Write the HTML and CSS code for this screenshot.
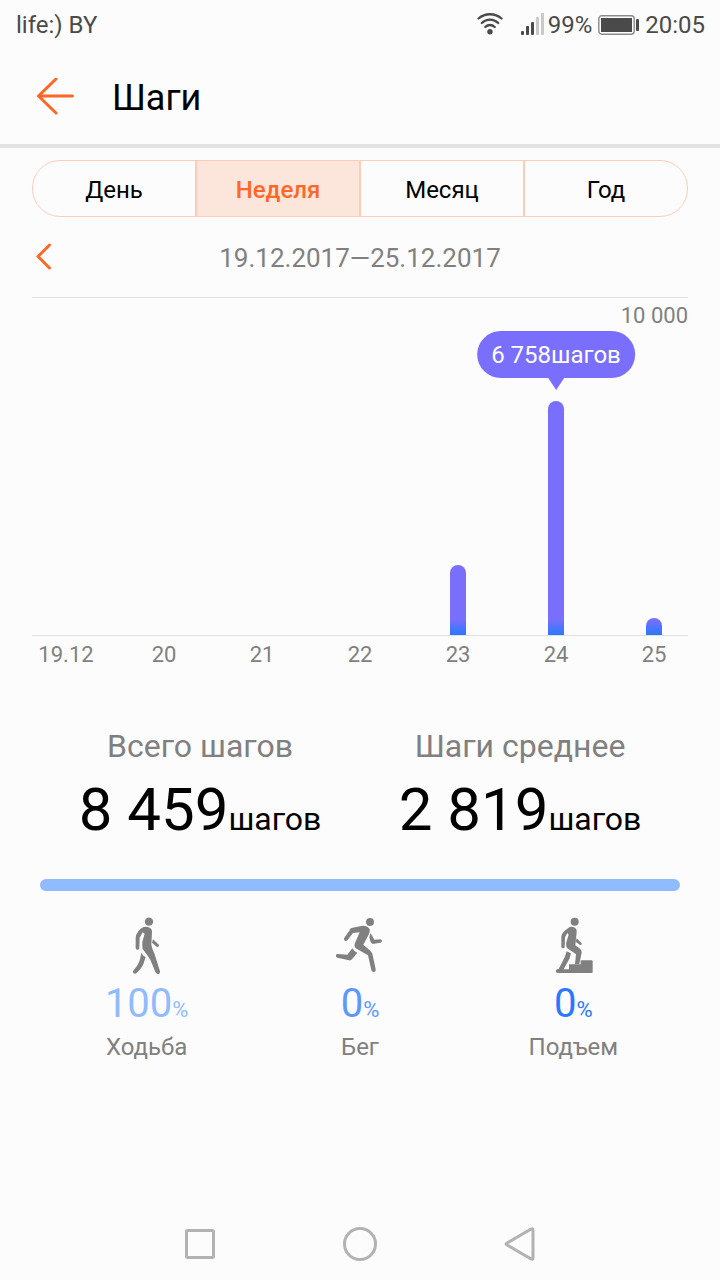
FILE: index.html
```html
<!DOCTYPE html>
<html lang="ru">

<head>
    <meta charset="UTF-8">
    <meta name="viewport" content="width=device-width, initial-scale=1.0">
    <title>Шаги</title>
    <link rel="stylesheet" href="styles.css">
</head>

<body>
    <div class="status">
        <span class="carrier">life:) BY</span>
        <svg class="wifi" width="26" height="24" viewBox="0 0 26 24">
            <g fill="none" stroke="#4a4a4a" stroke-width="2.3" stroke-linecap="round">
                <path d="M1.500 5.500C8 -.2 18 -.2 24.500 5.500"/>
                <path d="M4.800 10C9.500 5.500 16.500 5.500 21.200 10"/>
                <path d="M8.300 14C11 11.300 15 11.300 17.700 14"/>
            </g>
            <circle cx="13" cy="18.800" r="2.700" fill="#4a4a4a"/>
        </svg>
        <svg class="signal" width="24" height="24" viewBox="0 0 24 24">
            <g fill="#4a4a4a">
                <rect x="0" y="18" width="3" height="4" rx="1"/>
                <rect x="5" y="13" width="3" height="9" rx="1"/>
                <rect x="10" y="9" width="3" height="13" rx="1"/>
            </g>
            <g fill="#c9c9c9">
                <rect x="15" y="4" width="3" height="18" rx="1"/>
                <rect x="20" y="0" width="3" height="22" rx="1"/>
            </g>
        </svg>
        <span class="percent">99%</span>
        <svg class="battery" width="42" height="20" viewBox="0 0 42 20">
            <rect x=".8" y=".8" width="35.400" height="18.400" rx="3" fill="none" stroke="#8a8a8a" stroke-width="1.4"/>
            <rect x="3" y="3" width="31" height="14" fill="#4a4a4a"/>
            <rect x="38" y="4" width="3" height="12" rx="1" fill="#4a4a4a"/>
        </svg>
        <span>20:05</span>
    </div>

    <header class="header">
        <button class="icon-button" aria-label="Назад">
            <svg width="38" height="38" viewBox="0 0 38 38">
                <path d="M20 1L2.500 18L20 35M2.500 18H36.500"/>
            </svg>
        </button>
        <h1>Шаги</h1>
    </header>

    <main>
        <div class="tabs">
            <button>День</button>
            <button class="selected">Неделя</button>
            <button>Месяц</button>
            <button>Год</button>
        </div>

        <div class="period">
            <button class="icon-button" aria-label="Предыдущая неделя">
                <svg width="24" height="28" viewBox="0 0 24 28">
                    <path d="M17.500 2L6 13.500L17.500 25"/>
                </svg>
            </button>
            <span>19.12.2017—25.12.2017</span>
        </div>

        <div class="chart">
            <div class="plot">
                <span class="goal">10 000</span>
                <div class="bars">
                    <div class="col"></div>
                    <div class="col"></div>
                    <div class="col"></div>
                    <div class="col"></div>
                    <div class="col"><div class="bar" style="height: 70px"></div></div>
                    <div class="col"><div class="bar" style="height: 234px"><span class="tip">6 758шагов</span></div></div>
                    <div class="col"><div class="bar" style="height: 17px"></div></div>
                </div>
            </div>
            <div class="days">
                <span>19.12</span>
                <span>20</span>
                <span>21</span>
                <span>22</span>
                <span>23</span>
                <span>24</span>
                <span>25</span>
            </div>
        </div>

        <div class="summary">
            <div class="totals">
                <div class="total">
                    <h2>Всего шагов</h2>
                    <p>8 459<small>шагов</small></p>
                </div>
                <div class="total">
                    <h2>Шаги среднее</h2>
                    <p>2 819<small>шагов</small></p>
                </div>
            </div>

            <div class="share"></div>

            <div class="kinds">
                <div class="kind walk">
                    <svg width="80" height="60" viewBox="-9 33 240 180">
                        <circle cx="117" cy="50" r="12.500"/>
                        <path d="M101 66Q106 64 113 66Q127 69 126 82L124 119Q126 131 134 148L150 199Q151 207 144 207Q139 207 136 201L121 164Q112 150 98 132Q96 126 97 111L104 86L98 82L89 98L88 129Q87 135 82 134Q77 134 77 128V97Q78 88 84 80Q91 70 101 66Z"/>
                        <path d="M129 103L145 118Q149 122 145 125Q142 127 138 124L126 113Z"/>
                        <path d="M94 144Q99 153 107 156L100 178Q94 192 79 205Q74 208 70 204Q67 200 71 196Q86 179 90 163Z"/>
                    </svg>
                    <p>100<small>%</small></p>
                    <span>Ходьба</span>
                </div>
                <div class="kind run">
                    <svg width="80" height="60" viewBox="0 33 240 180">
                        <circle cx="150" cy="51" r="12"/>
                        <path d="M94 69L128 62Q145 63 149 73Q151 79 147 87L130 119L151 137Q157 143 158 150L167 193Q168 201 161 201Q156 201 154 195L144 151L111 132Q100 126 105 114L119 82L99 84L83 105Q78 110 73 106Q70 103 74 97L88 77Q90 71 94 69Z"/>
                        <path d="M152 84L163 104L181 103Q187 104 186 109Q185 113 181 113L158 117Q154 116 151 109L148 96Z"/>
                        <path d="M97 130Q102 140 112 143L96 163Q92 167 87 166L52 158Q46 156 48 150Q49 146 55 147L82 149Z"/>
                    </svg>
                    <p>0<small>%</small></p>
                    <span>Бег</span>
                </div>
                <div class="kind climb">
                    <svg width="80" height="60" viewBox="-20 33 240 180">
                        <circle cx="105" cy="50" r="12"/>
                        <path d="M87 68Q94 63 103 67Q112 71 111 82L107 121L121 131Q127 136 126 143L119 177H106L109 148L83 130Q78 125 80 112L87 89L83 84L76 97L75 125Q75 130 70 130Q65 130 65 125V95Q66 86 74 78Z"/>
                        <path d="M111 100L125 113Q128 117 125 119Q122 122 118 118L108 110Z"/>
                        <path d="M81 139L94 145L90 160L72 193H88V178H123V166H156Q159 166 159 169V201Q159 204 155 204H52Q48 203 49 196Q51 192 57 192L75 157Z"/>
                    </svg>
                    <p>0<small>%</small></p>
                    <span>Подъем</span>
                </div>
            </div>
        </div>
    </main>

    <nav class="navbar">
        <button aria-label="Недавние">
            <svg width="36" height="36" viewBox="0 0 36 36">
                <rect x="4.500" y="4.500" width="27" height="27" rx="1"/>
            </svg>
        </button>
        <button aria-label="Домой">
            <svg width="36" height="36" viewBox="0 0 36 36">
                <circle cx="18" cy="18" r="15.500"/>
            </svg>
        </button>
        <button aria-label="Назад">
            <svg width="36" height="36" viewBox="0 0 36 36">
                <path d="M5 17L29 3Q31 2 31 4V32Q31 34 29 33L5 19Q3 18 5 17Z"/>
            </svg>
        </button>
    </nav>
</body>

</html>
```

FILE: styles.css
```css
* {
    box-sizing: border-box;
    margin: 0;
    padding: 0;
}
body {
    display: flex;
    flex-direction: column;
    min-height: 100vh;
    background-color: #fcfcfc;
    color: #000;
    font-family: Roboto, "Noto Sans", sans-serif;
    font-size: 24px;
}
button {
    border: none;
    background: none;
    color: inherit;
    font: inherit;
    cursor: pointer;
}
svg {
    display: block;
}

/* status bar */
.status {
    display: flex;
    align-items: center;
    height: 50px;
    padding: 0 15px 0 16px;
    color: #4a4a4a;
}
.carrier {
    margin-right: auto;
}
.signal {
    margin: 0 3px 0 18px;
}
.battery {
    margin: 0 5px 0 6px;
}

/* header */
.header {
    display: flex;
    align-items: center;
    gap: 38px;
    height: 98px;
    padding: 0 36px;
    border-bottom: 4px solid #e3e3e3;
}
.header h1 {
    padding-top: 2px;
    font-size: 36px;
    font-weight: 400;
}
.icon-button path {
    fill: none;
    stroke: #ff6726;
    stroke-width: 3;
    stroke-linecap: round;
    stroke-linejoin: round;
}

main {
    padding: 12px 32px 0;
}
.tabs {
    display: flex;
    height: 57px;
    border: 1px solid #fccdb9;
    border-radius: 28px;
    overflow: hidden;
}
.tabs button {
    flex: 1;
    padding-top: 2px;
}
.tabs button + button {
    border-left: 2px solid #fccdb9;
}
.tabs .selected {
    background-color: #fce5db;
    color: #ff6726;
    font-weight: 500;
}

.period {
    display: grid;
    grid-template-columns: 24px 1fr 24px;
    align-items: center;
    height: 80px;
    color: #808080;
    font-size: 26px;
    text-align: center;
}
.period span {
    padding-top: 2px;
}

/* chart */
.chart {
    color: #808080;
    font-size: 22px;
}
.plot {
    display: flex;
    flex-direction: column;
    height: 339px;
    border-top: 1px solid #e0e0e0;
    border-bottom: 1px solid #e0e0e0;
}
.goal {
    align-self: flex-end;
    line-height: 36px;
}
.bars,
.days {
    display: grid;
    grid-template-columns: repeat(7, 1fr);
    margin: 0 -15px;
}
.bars {
    flex: 1;
}
.col {
    display: flex;
    align-items: flex-end;
    justify-content: center;
}
.bar {
    position: relative;
    width: 16px;
    border-radius: 8px 8px 0 0;
    background: linear-gradient(to top, #2b78ff, #7a6ffd 16px);
}
.tip {
    position: absolute;
    bottom: 100%;
    left: 50%;
    margin-bottom: 23px;
    padding: 1px 14px 0;
    border-radius: 24px;
    background-color: #7a6ffd;
    color: #fff;
    font-size: 24px;
    line-height: 46px;
    white-space: nowrap;
    transform: translateX(-50%);
}
.tip::after {
    content: "";
    position: absolute;
    top: 100%;
    left: 50%;
    margin-left: -8px;
    border: 8px solid transparent;
    border-top: 12px solid #7a6ffd;
    border-bottom: none;
}
.days {
    line-height: 38px;
    text-align: center;
}

/* totals */
.summary {
    padding: 52px 8px 0;
}
.totals {
    display: grid;
    grid-template-columns: 1fr 1fr;
    text-align: center;
}
.total h2 {
    color: #808080;
    font-size: 32px;
    font-weight: 400;
    line-height: 40px;
}
.total p {
    font-size: 60px;
    line-height: 88px;
}
.total small {
    font-size: 32px;
}
.share {
    height: 12px;
    margin: 16px 0 25px;
    border-radius: 6px;
    background-color: #91bbff;
}

.kinds {
    display: grid;
    grid-template-columns: repeat(3, 1fr);
    color: #808080;
    text-align: center;
}
.kind svg {
    margin: 0 auto 4px;
    fill: #808080;
}
.kind p {
    font-size: 40px;
    line-height: 48px;
}
.kind small {
    font-size: 22px;
}
.kind span {
    display: block;
    line-height: 26px;
}
.walk p {
    color: #91bbff;
}
.run p {
    color: #5c98ff;
}
.climb p {
    color: #2b78ff;
}

/* system buttons */
.navbar {
    display: flex;
    justify-content: center;
    height: 72px;
    margin-top: auto;
}
.navbar button {
    width: 160px;
}
.navbar svg {
    margin: 0 auto;
    fill: none;
    stroke: #b2b2b2;
    stroke-width: 3;
}
```
